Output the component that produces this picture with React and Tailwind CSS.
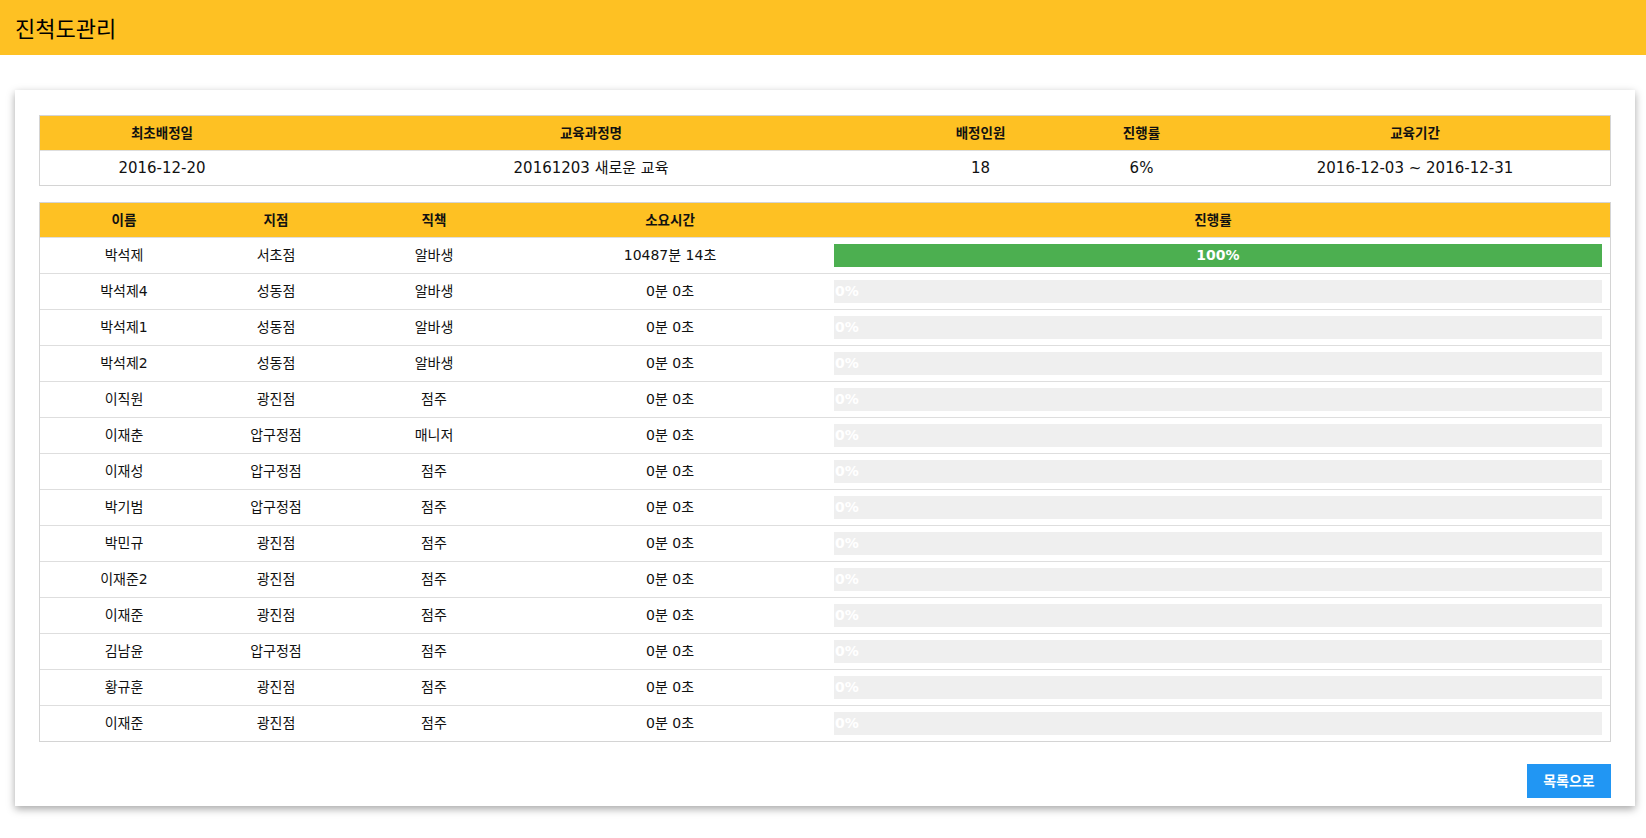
import React from "react";

const rows = [
  { name: "박석제", branch: "서초점", role: "알바생", time: "10487분 14초", rate: 100 },
  { name: "박석제4", branch: "성동점", role: "알바생", time: "0분 0초", rate: 0 },
  { name: "박석제1", branch: "성동점", role: "알바생", time: "0분 0초", rate: 0 },
  { name: "박석제2", branch: "성동점", role: "알바생", time: "0분 0초", rate: 0 },
  { name: "이직원", branch: "광진점", role: "점주", time: "0분 0초", rate: 0 },
  { name: "이재춘", branch: "압구정점", role: "매니저", time: "0분 0초", rate: 0 },
  { name: "이재성", branch: "압구정점", role: "점주", time: "0분 0초", rate: 0 },
  { name: "박기범", branch: "압구정점", role: "점주", time: "0분 0초", rate: 0 },
  { name: "박민규", branch: "광진점", role: "점주", time: "0분 0초", rate: 0 },
  { name: "이재준2", branch: "광진점", role: "점주", time: "0분 0초", rate: 0 },
  { name: "이재준", branch: "광진점", role: "점주", time: "0분 0초", rate: 0 },
  { name: "김남윤", branch: "압구정점", role: "점주", time: "0분 0초", rate: 0 },
  { name: "황규훈", branch: "광진점", role: "점주", time: "0분 0초", rate: 0 },
  { name: "이재준", branch: "광진점", role: "점주", time: "0분 0초", rate: 0 },
];

function ProgressBar({ rate }) {
  // full bar shows centered label, empty one keeps label at the left
  if (rate >= 100) {
    return (
      <div className="h-[23px] w-full bg-[#4caf50] flex items-center justify-center text-white font-bold text-[14px]">
        {rate}%
      </div>
    );
  }
  return (
    <div className="relative h-[23px] w-full bg-[#efefef]">
      <div
        className="h-full bg-[#4caf50] flex items-center text-white font-bold text-[14px]"
        style={{ width: `${rate}%` }}
      >
        <span className="pl-px">{rate}%</span>
      </div>
    </div>
  );
}

function App() {
  return (
    <div
      className="min-h-screen bg-white text-[#111]"
      style={{ fontFamily: '"DejaVu Sans", "Noto Sans CJK KR", sans-serif' }}
    >
      <header className="h-[55px] bg-[#fec123] flex items-center pl-[15px]">
        <h1 className="text-[22px] font-normal text-black" style={{ fontFamily: '"Noto Sans CJK KR", sans-serif' }}>
          진척도관리
        </h1>
      </header>

      <div className="pt-[35px] pl-[15px] pr-[11px] pb-[32px]">
        <div className="bg-white shadow-[0_3px_8px_rgba(0,0,0,0.35)] px-[24px] pt-[25px] pb-[8px]">
          {/* course summary */}
          <div className="border border-[#d4d4d4]">
            <div className="flex h-[34px] bg-[#fec123] text-[13.5px] font-bold items-center text-center">
              <div className="w-[244px]">최초배정일</div>
              <div className="w-[614px]">교육과정명</div>
              <div className="w-[165px]">배정인원</div>
              <div className="w-[157px]">진행률</div>
              <div className="flex-1">교육기간</div>
            </div>
            <div className="flex h-[35px] border-t border-[#dedede] text-[15px] items-center text-center">
              <div className="w-[244px]">2016-12-20</div>
              <div className="w-[614px]">20161203 새로운 교육</div>
              <div className="w-[165px]">18</div>
              <div className="w-[157px]">6%</div>
              <div className="flex-1">2016-12-03 ~ 2016-12-31</div>
            </div>
          </div>

          {/* members */}
          <div className="mt-[16px] border border-[#d4d4d4]">
            <div className="flex h-[34px] bg-[#fec123] text-[13.5px] font-bold items-center text-center">
              <div className="w-[168px]">이름</div>
              <div className="w-[136px]">지점</div>
              <div className="w-[180px]">직책</div>
              <div className="w-[292px]">소요시간</div>
              <div className="flex-1">진행률</div>
            </div>
            {rows.map((row, index) => (
              <div
                key={index}
                className="flex h-[36px] border-t border-[#dedede] text-[14px] items-center text-center"
              >
                <div className="w-[168px]">{row.name}</div>
                <div className="w-[136px]">{row.branch}</div>
                <div className="w-[180px]">{row.role}</div>
                <div className="w-[292px]">{row.time}</div>
                <div className="flex-1 pl-[18px] pr-[8px]">
                  <ProgressBar rate={row.rate} />
                </div>
              </div>
            ))}
          </div>

          <div className="flex justify-end mt-[22px]">
            <button className="w-[84px] h-[34px] bg-[#2196f3] text-white text-[14px] font-bold">
              목록으로
            </button>
          </div>
        </div>
      </div>
    </div>
  );
}

export default App;
